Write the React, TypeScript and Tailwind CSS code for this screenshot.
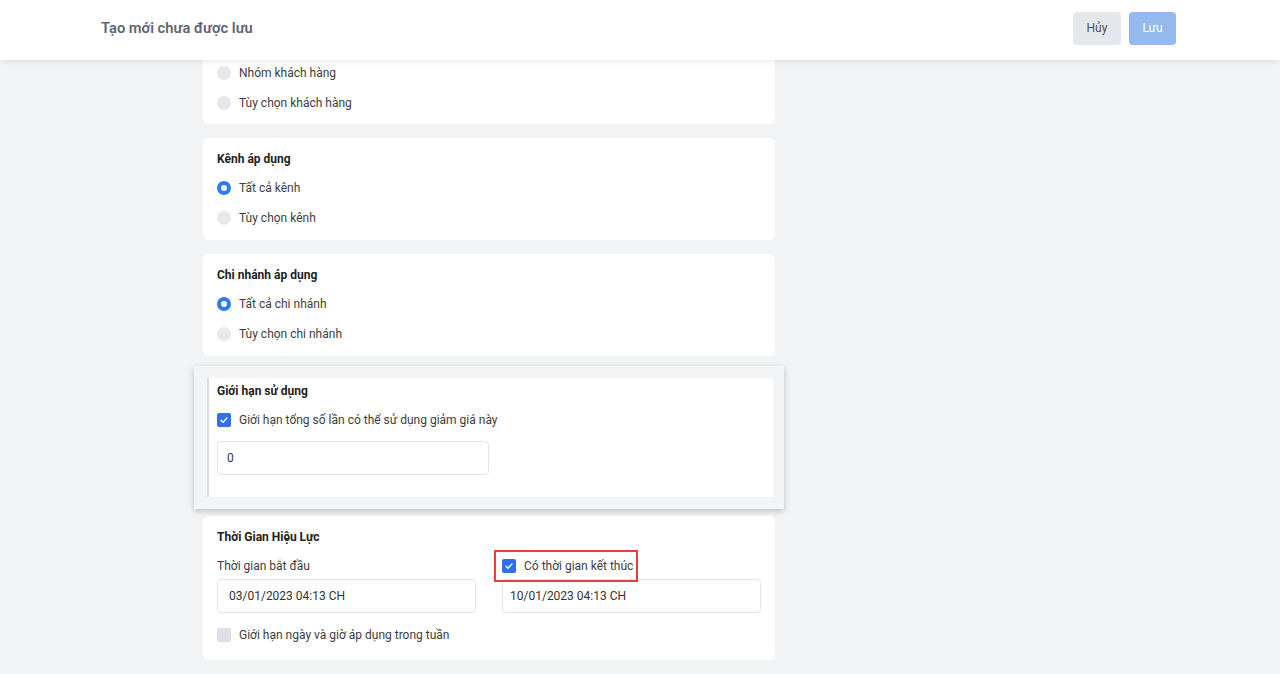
import React from "react";

const font = { fontFamily: "Roboto, 'Noto Sans', Arial, sans-serif" };

function Radio({ checked, label }: { checked?: boolean; label: string }) {
  return (
    <div className="flex h-[30px] items-center gap-2">
      {checked ? (
        <span className="h-[14px] w-[14px] rounded-full border-[4px] border-[#2b7bf3] bg-white" />
      ) : (
        <span className="h-[14px] w-[14px] rounded-full bg-[#e6e8eb]" />
      )}
      <span className="text-[12px] text-[#3d3d3d]">{label}</span>
    </div>
  );
}

function Checkbox({ checked }: { checked?: boolean }) {
  if (!checked) return <span className="h-[14px] w-[14px] rounded-[2px] bg-[#dde0e7]" />;
  return (
    <span className="flex h-[14px] w-[14px] items-center justify-center rounded-[2px] bg-[#2f6fe8]">
      <svg width="10" height="10" viewBox="0 0 10 10" fill="none">
        <path d="M2 5.2 4.1 7.2 8 2.9" stroke="white" strokeWidth="1.4" strokeLinecap="round" strokeLinejoin="round" />
      </svg>
    </span>
  );
}

function Card({ title, children }: { title?: string; children: React.ReactNode }) {
  return (
    <section className="rounded-[6px] bg-white px-[14px] pb-[7px] pt-[12px]">
      {title && <h3 className="mb-[5px] text-[12px] font-bold leading-[18px] text-[#222]">{title}</h3>}
      {children}
    </section>
  );
}

export default function App() {
  return (
    <div className="h-[674px] overflow-hidden bg-[#f2f3f5]" style={font}>
      <header className="relative z-10 flex h-[60px] items-center justify-between bg-white pb-[4px] pl-[101px] pr-[104px] shadow-[0_2px_6px_rgba(0,0,0,0.08)]">
        <h1 className="text-[14.7px] font-semibold text-[#5c6675]">Tạo mới chưa được lưu</h1>
        <div className="flex gap-2">
          <button className="h-[33px] w-[48px] rounded-[4px] bg-[#e4e7ec] text-[12px] text-[#4b5563]">Hủy</button>
          <button className="h-[33px] w-[47px] rounded-[4px] bg-[#94b9ee] text-[12px] text-white">Lưu</button>
        </div>
      </header>

      <main className="ml-[203px] flex w-[572px] flex-col">
        <section className="-mt-[2px] rounded-b-[6px] bg-white px-[14px] pb-[6px]">
          <Radio label="Nhóm khách hàng" />
          <Radio label="Tùy chọn khách hàng" />
        </section>

        <div className="mt-[14px]">
          <Card title="Kênh áp dụng">
            <Radio checked label="Tất cả kênh" />
            <Radio label="Tùy chọn kênh" />
          </Card>
        </div>

        <div className="mt-[14px]">
          <Card title="Chi nhánh áp dụng">
            <Radio checked label="Tất cả chi nhánh" />
            <Radio label="Tùy chọn chi nhánh" />
          </Card>
        </div>

        <div className="-mx-[9px] mt-[10px] h-[143px] bg-[#f3f4f6] pb-[12px] pl-[13px] pr-[11px] pt-[12px] shadow-[0_2px_6px_rgba(0,0,0,0.22)]">
          <div className="h-full border-l-2 border-[#dcdde0] bg-white pl-[8px] pt-[4px]">
            <h3 className="text-[12px] font-bold leading-[18px] text-[#222]">Giới hạn sử dụng</h3>
            <div className="mt-[5px] flex h-[30px] items-center gap-2">
              <Checkbox checked />
              <span className="text-[12px] text-[#3d3d3d]">Giới hạn tổng số lần có thể sử dụng giảm giá này</span>
            </div>
            <div className="mt-[6px] flex h-[34px] w-[272px] items-center rounded-[4px] border border-[#e3e5e8] px-[9px] text-[12px] text-[#333]">
              0
            </div>
          </div>
        </div>

        <section className="mt-[7px] rounded-[6px] bg-white px-[14px] pb-[10px] pt-[12px]">
          <h3 className="text-[12px] font-bold leading-[18px] text-[#222]">Thời Gian Hiệu Lực</h3>
          <div className="mt-[6px] grid grid-cols-2 gap-x-[26px]">
            <div>
              <div className="flex h-[27px] items-center text-[12px] text-[#3d3d3d]">Thời gian bắt đầu</div>
              <div className="flex h-[34px] items-center rounded-[4px] border border-[#e3e5e8] px-[11px] text-[12px] text-[#333]">
                03/01/2023 04:13 CH
              </div>
            </div>
            <div>
              <div className="flex h-[27px] items-center">
                <div className="-ml-[8px] flex h-[32px] items-center gap-2 border-2 border-[#ef3b3b] pl-[6px] pr-[3px]">
                  <Checkbox checked />
                  <span className="text-[12px] text-[#3d3d3d]">Có thời gian kết thúc</span>
                </div>
              </div>
              <div className="flex h-[34px] items-center rounded-[4px] border border-[#e3e5e8] px-[7px] text-[12px] text-[#333]">
                10/01/2023 04:13 CH
              </div>
            </div>
          </div>
          <div className="mt-[7px] flex h-[30px] items-center gap-2">
            <Checkbox />
            <span className="text-[12px] text-[#3d3d3d]">Giới hạn ngày và giờ áp dụng trong tuần</span>
          </div>
        </section>
      </main>
    </div>
  );
}
